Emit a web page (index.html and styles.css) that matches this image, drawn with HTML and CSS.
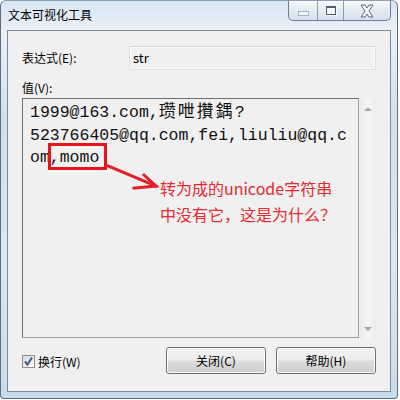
FILE: index.html
```html
<!DOCTYPE html>
<html>
<head>
<meta charset="utf-8">
<link rel="stylesheet" href="styles.css">
</head>
<body>
<div class="window">
  <div class="titlebar">
    <span class="title">文本可视化工具</span>
    <div class="caption">
      <div class="cbtn min"><span class="glyph-min"></span></div>
      <div class="cbtn max"><span class="glyph-max"></span></div>
      <div class="cbtn close">
        <svg width="16" height="14" viewBox="0 0 16 14"><path d="M2 1 L6 1 L8 4 L10 1 L14 1 L10 7 L14 13 L10 13 L8 10 L6 13 L2 13 L6 7 Z" fill="#f4f7fa" stroke="#5d6b78" stroke-width="1"/></svg>
      </div>
    </div>
  </div>
  <div class="client">
    <div class="row-expr">
      <span class="label">表达式(E):</span>
      <div class="expr-box">str</div>
    </div>
    <div class="label value-label">值(V):</div>
    <div class="value-area">
      <div class="textbox">
        <div class="mono">1999@163.com,<span class="cjk">瓒呭攢鍝</span>?<br>523766405@qq.com,fei,liuliu@qq.c<br>om,momo</div>
        <div class="redbox"></div>
        <svg class="arrow" width="80" height="40" viewBox="0 0 80 40">
          <g stroke="#e0202a" stroke-width="3" fill="none" stroke-linecap="square">
            <path d="M2 2 L50 22"/>
            <path d="M38 11 L50 22 L28 24"/>
          </g>
        </svg>
        <div class="note">转为成的unicode字符串<br>中没有它，这是为什么？</div>
      </div>
      <div class="scrollbar">
        <span class="tri up"></span>
        <span class="tri down"></span>
      </div>
    </div>
    <div class="bottom-row">
      <label class="check"><span class="checkbox"><svg width="11" height="11" viewBox="0 0 11 11"><path d="M2 5.5 L4.5 8.5 L9 1.5" stroke="#3b5c8c" stroke-width="2" fill="none"/></svg></span>换行(W)</label>
      <div class="buttons">
        <div class="btn">关闭(C)</div>
        <div class="btn">帮助(H)</div>
      </div>
    </div>
  </div>
</div>
</body>
</html>
```
FILE: styles.css
```css
html, body {
  margin: 0;
  padding: 0;
  width: 400px;
  height: 400px;
  overflow: hidden;
  background: #ffffff;
}
body {
  font-family: "Noto Sans CJK SC", "Noto Sans", sans-serif;
  font-size: 12px;
  color: #000;
}
.window {
  width: 398px;
  height: 399px;
  border: 1px solid #5e6d7c;
  border-top-color: #8aa0b4;
  border-radius: 6px 6px 4px 4px;
  background: linear-gradient(180deg, #d8e6f3 0px, #e9f1f8 30px, #cfe0ef 120px, #dbe8f4 260px, #c8dbec 400px);
  box-sizing: border-box;
  display: flex;
  flex-direction: column;
}
.titlebar {
  height: 29px;
  display: flex;
  align-items: flex-start;
  justify-content: space-between;
  padding-left: 7px;
  padding-right: 6px;
  flex-shrink: 0;
}
.title {
  margin-top: 5px;
  font-size: 12px;
  line-height: 18px;
  color: #000;
}
.caption {
  display: flex;
  height: 19px;
  border: 1px solid #6f7f8f;
  border-top: none;
  border-radius: 0 0 5px 5px;
  overflow: hidden;
  background: linear-gradient(180deg, #f6f9fc, #e2ebf4 50%, #d5e2ee);
}
.cbtn {
  display: flex;
  align-items: center;
  justify-content: center;
  height: 19px;
  border-left: 1px solid #8c9cab;
}
.cbtn:first-child { border-left: none; }
.min { width: 28px; }
.max { width: 25px; }
.close { width: 46px; }
.glyph-min {
  width: 9px;
  height: 3px;
  border: 1px solid #a7b4c1;
  background: #f2f5f8;
  margin-top: 6px;
}
.glyph-max {
  width: 8px;
  height: 6px;
  border: 1px solid #4f5d6a;
  border-top-width: 2px;
  background: #f4f7fa;
  box-shadow: 0 0 0 1px #f4f7fa;
}
.client {
  margin: 0 6px 0 6px;
  height: 362px;
  border: 1px solid #7f8d9b;
  background: #f0f0f0;
  box-sizing: border-box;
  padding: 15px 14px 0 14px;
  display: flex;
  flex-direction: column;
}
.row-expr {
  display: flex;
  align-items: center;
  height: 24px;
  justify-content: space-between;
}
.label {
  font-size: 12px;
  line-height: 16px;
}
.expr-box {
  height: 22px;
  border: 1px solid #dedede;
  border-top-color: #d2d2d2;
  background: #f0f0f0;
  box-shadow: inset 0 0 0 1px #fbfbfb;
  box-sizing: content-box;
  font-size: 13px;
  line-height: 22px;
  padding-left: 3px;
  width: 242px;
}
.value-label {
  margin-top: 8px;
  height: 20px;
  line-height: 20px;
}
.value-area {
  display: flex;
  height: 240px;
}
.textbox {
  position: relative;
  width: 339px;
  height: 240px;
  border: 1px solid #707070;
  border-color: #707070 #a0a0a0 #a0a0a0 #707070;
  box-sizing: border-box;
  background: #f0f0f0;
  padding: 0 0 0 7px;
}
.mono {
  font-family: "Liberation Mono", "DejaVu Sans Mono", monospace;
  font-size: 16.5px;
  line-height: 22.5px;
  color: #111;
  white-space: nowrap;
}
.cjk {
  font-family: "Noto Sans CJK SC", sans-serif;
  letter-spacing: 2px;
  font-size: 17px;
}
.redbox {
  position: absolute;
  left: 25px;
  top: 44px;
  width: 53px;
  height: 21px;
  border: 3px solid #e3151f;
}
.arrow {
  position: absolute;
  left: 83px;
  top: 65px;
}
.note {
  position: absolute;
  left: 137px;
  top: 76px;
  font-family: "Noto Sans CJK SC", sans-serif;
  font-size: 16px;
  line-height: 26px;
  color: #e52a2f;
  white-space: nowrap;
}
.scrollbar {
  width: 16px;
  height: 240px;
  margin-left: 1px;
  background: linear-gradient(90deg, #ebebeb, #f6f6f6 50%, #ececec);
  position: relative;
}
.tri {
  position: absolute;
  left: 4px;
  width: 0;
  height: 0;
  border-left: 4px solid transparent;
  border-right: 4px solid transparent;
}
.tri.up {
  top: 9px;
  border-bottom: 4px solid #a6a6a6;
}
.tri.down {
  bottom: 7px;
  border-top: 4px solid #a6a6a6;
}
.bottom-row {
  display: flex;
  align-items: center;
  justify-content: space-between;
  margin-top: 9px;
  height: 27px;
}
.check {
  display: flex;
  align-items: center;
  gap: 3px;
  margin-top: 2px;
}
.checkbox {
  width: 11px;
  height: 11px;
  border: 1px solid #8e8f8f;
  background: linear-gradient(135deg, #dcdcdc, #fafafa);
  display: flex;
  align-items: center;
  justify-content: center;
}
.buttons {
  display: flex;
  gap: 10px;
}
.btn {
  width: 98px;
  height: 25px;
  border: 1px solid #707070;
  border-radius: 3px;
  background: linear-gradient(180deg, #f2f2f2 0%, #ebebeb 48%, #dddddd 52%, #cfcfcf 100%);
  box-shadow: inset 0 0 0 1px #fcfcfc;
  display: flex;
  align-items: center;
  justify-content: center;
  font-size: 12px;
}
```
